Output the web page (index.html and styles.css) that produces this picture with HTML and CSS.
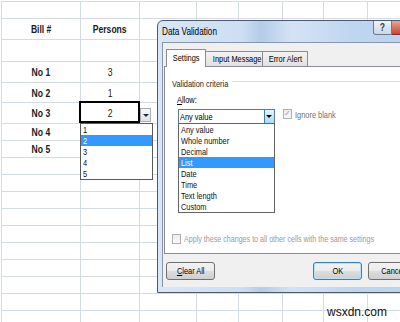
FILE: index.html
```html
<!DOCTYPE html>
<html lang="en">
<head>
    <meta charset="UTF-8">
    <meta name="viewport" content="width=device-width, initial-scale=1.0">
    <title>Data Validation</title>
    <link rel="stylesheet" href="styles.css">
</head>
<body>
    <div class="sheet">
        <div class="row h17"><div class="cell"></div><div class="cell"></div><div class="cell"></div><div class="cell"></div><div class="cell"></div><div class="cell"></div><div class="cell"></div><div class="cell"></div></div>
        <div class="row h21"><div class="cell bold"><span class="t">Bill #</span></div><div class="cell bold"><span class="t">Persons</span></div><div class="cell"></div><div class="cell"></div><div class="cell"></div><div class="cell"></div><div class="cell"></div><div class="cell"></div></div>
        <div class="row h22"><div class="cell"></div><div class="cell"></div><div class="cell"></div><div class="cell"></div><div class="cell"></div><div class="cell"></div><div class="cell"></div><div class="cell"></div></div>
        <div class="row h21"><div class="cell bold"><span class="t">No 1</span></div><div class="cell"><span class="t">3</span></div><div class="cell"></div><div class="cell"></div><div class="cell"></div><div class="cell"></div><div class="cell"></div><div class="cell"></div></div>
        <div class="row h20"><div class="cell bold"><span class="t">No 2</span></div><div class="cell"><span class="t">1</span></div><div class="cell"></div><div class="cell"></div><div class="cell"></div><div class="cell"></div><div class="cell"></div><div class="cell"></div></div>
        <div class="row h21">
            <div class="cell bold"><span class="t">No 3</span></div>
            <div class="cell active"><span class="t">2</span>
                <span class="cell-drop"></span>
                <ul class="cell-list">
                    <li><span class="t">1</span></li>
                    <li class="sel"><span class="t">2</span></li>
                    <li><span class="t">3</span></li>
                    <li><span class="t">4</span></li>
                    <li><span class="t">5</span></li>
                </ul>
            </div>
            <div class="cell"></div><div class="cell"></div><div class="cell"></div><div class="cell"></div><div class="cell"></div><div class="cell"></div>
        </div>
        <div class="row h17"><div class="cell bold"><span class="t">No 4</span></div><div class="cell"></div><div class="cell"></div><div class="cell"></div><div class="cell"></div><div class="cell"></div><div class="cell"></div><div class="cell"></div></div>
        <div class="row h17"><div class="cell bold"><span class="t">No 5</span></div><div class="cell"></div><div class="cell"></div><div class="cell"></div><div class="cell"></div><div class="cell"></div><div class="cell"></div><div class="cell"></div></div>
        <div class="row h17"><div class="cell"></div><div class="cell"></div><div class="cell"></div><div class="cell"></div><div class="cell"></div><div class="cell"></div><div class="cell"></div><div class="cell"></div></div>
        <div class="row h17"><div class="cell"></div><div class="cell"></div><div class="cell"></div><div class="cell"></div><div class="cell"></div><div class="cell"></div><div class="cell"></div><div class="cell"></div></div>
        <div class="row h17"><div class="cell"></div><div class="cell"></div><div class="cell"></div><div class="cell"></div><div class="cell"></div><div class="cell"></div><div class="cell"></div><div class="cell"></div></div>
        <div class="row h17"><div class="cell"></div><div class="cell"></div><div class="cell"></div><div class="cell"></div><div class="cell"></div><div class="cell"></div><div class="cell"></div><div class="cell"></div></div>
        <div class="row h17"><div class="cell"></div><div class="cell"></div><div class="cell"></div><div class="cell"></div><div class="cell"></div><div class="cell"></div><div class="cell"></div><div class="cell"></div></div>
        <div class="row h17"><div class="cell"></div><div class="cell"></div><div class="cell"></div><div class="cell"></div><div class="cell"></div><div class="cell"></div><div class="cell"></div><div class="cell"></div></div>
        <div class="row h17"><div class="cell"></div><div class="cell"></div><div class="cell"></div><div class="cell"></div><div class="cell"></div><div class="cell"></div><div class="cell"></div><div class="cell"></div></div>
        <div class="row h17"><div class="cell"></div><div class="cell"></div><div class="cell"></div><div class="cell"></div><div class="cell"></div><div class="cell"></div><div class="cell"></div><div class="cell"></div></div>
        <div class="row h17"><div class="cell"></div><div class="cell"></div><div class="cell"></div><div class="cell"></div><div class="cell"></div><div class="cell"></div><div class="cell"></div><div class="cell"></div></div>
        <div class="row h17"><div class="cell"></div><div class="cell"></div><div class="cell"></div><div class="cell"></div><div class="cell"></div><div class="cell"></div><div class="cell"></div><div class="cell"></div></div>
    </div>

    <div class="dialog">
        <div class="titlebar">
            <span class="title t">Data Validation</span>
            <div class="caption-btns">
                <span class="help-btn"><span class="t">?</span></span>
                <span class="close-btn"></span>
            </div>
        </div>
        <div class="client">
            <div class="tabs">
                <span class="tab tab-settings active"><span class="t">Settings</span></span>
                <span class="tab tab-input"><span class="t">Input Message</span></span>
                <span class="tab tab-error"><span class="t">Error Alert</span></span>
            </div>
            <div class="panel">
                <div class="group-title"><span class="t">Validation criteria</span></div>
                <div class="allow-label"><span class="t"><u>A</u>llow:</span></div>
                <div class="allow-row">
                    <div class="combo">
                        <span class="combo-text"><span class="t">Any value</span></span>
                        <span class="combo-btn"></span>
                        <ul class="combo-list">
                            <li><span class="t">Any value</span></li>
                            <li><span class="t">Whole number</span></li>
                            <li><span class="t">Decimal</span></li>
                            <li class="sel"><span class="t">List</span></li>
                            <li><span class="t">Date</span></li>
                            <li><span class="t">Time</span></li>
                            <li><span class="t">Text length</span></li>
                            <li><span class="t">Custom</span></li>
                        </ul>
                    </div>
                    <label class="check ignore"><span class="box checked">&#10003;</span><span class="t">Ignore blank</span></label>
                </div>
                <label class="check apply"><span class="box"></span><span class="t">Apply these changes to all other cells with the same settings</span></label>
            </div>
            <div class="buttons">
                <span class="btn"><span class="t"><u>C</u>lear All</span></span>
                <span class="btn ok"><span class="t">OK</span></span>
                <span class="btn cancel"><span class="t">Cancel</span></span>
            </div>
        </div>
    </div>

    <div class="watermark">wsxdn.com</div>
</body>
</html>
```

FILE: styles.css
```css
* {
    box-sizing: border-box;
}
html, body {
    margin: 0;
    padding: 0;
    overflow: hidden;
}
body {
    position: relative;
    width: 400px;
    height: 322px;
    background-color: #fff;
    font-family: "Liberation Sans", Arial, sans-serif;
    color: #000;
}
/* the screenshot is squeezed sideways, so every label is narrowed */
.t {
    display: inline-block;
    white-space: nowrap;
    transform: scaleX(0.78);
    transform-origin: left center;
}
.cell .t,
.tab .t,
.btn .t,
.help-btn .t {
    transform-origin: center;
}
/* spreadsheet behind the dialog */
.sheet {
    margin: 1px 0 0 1px;
    border-top: 1px solid #d5dbe6;
    border-left: 1px solid #d5dbe6;
    width: max-content;
}
.row {
    display: grid;
    grid-template-columns: 79px 59px 57px 42px 44px 41px 44px 44px;
}
.h17 { height: 17px; }
.h20 { height: 20px; }
.h21 { height: 21px; }
.h22 { height: 22px; }
.cell {
    position: relative;
    border-right: 1px solid #d5dbe6;
    border-bottom: 1px solid #d5dbe6;
    display: flex;
    align-items: center;
    justify-content: center;
    font-size: 11px;
    color: #1a1a1a;
}
.cell.bold {
    font-weight: bold;
}
.cell.active::after {
    content: "";
    position: absolute;
    top: -2px;
    left: -2px;
    right: -1px;
    bottom: 0;
    border: 2px solid #000;
}
.cell-drop {
    position: absolute;
    left: calc(100% + 1px);
    top: 5px;
    width: 11px;
    height: 14px;
    border: 1px solid #a9adb5;
    background: linear-gradient(#f7f7f7, #dfe2e6);
}
.cell-drop::after {
    content: "";
    position: absolute;
    left: 2px;
    top: 5px;
    border-left: 3px solid transparent;
    border-right: 3px solid transparent;
    border-top: 3px solid #1e2a44;
}
.cell-list {
    position: absolute;
    top: 100%;
    left: -1px;
    width: 73px;
    margin: 0;
    padding: 0;
    list-style: none;
    background: #fff;
    border: 1px solid #5a5a5a;
    z-index: 2;
    text-align: left;
}
.cell-list li,
.combo-list li {
    height: 11px;
    line-height: 11px;
    font-size: 9.5px;
    padding-left: 2px;
    color: #111;
}
.cell-list li .t {
    transform-origin: left center;
}
.cell-list li.sel,
.combo-list li.sel {
    background-color: #3399ff;
    color: #fff;
}
/* dialog window */
.dialog {
    position: absolute;
    left: 157px;
    top: 20px;
    width: 280px;
    height: 273px;
    border: 1px solid #4b5b6d;
    border-radius: 6px 6px 0 0;
    background: linear-gradient(to right, #d9e6f5 0%, #cddff3 30%, #b4cce8 37%, #d3e3f5 48%, #bfd6f0 70%, #b9d1ee 100%);
    padding: 0 5px 5px 4px;
    display: flex;
    flex-direction: column;
    z-index: 3;
}
.titlebar {
    height: 21px;
    display: flex;
    align-items: flex-start;
    margin-left: -4px;
    padding-left: 4px;
    margin-right: -5px;
}
.title {
    line-height: 21px;
    font-size: 10.5px;
    color: #000;
}
.caption-btns {
    margin-left: auto;
    display: flex;
}
.help-btn {
    width: 19px;
    height: 14px;
    border: 1px solid #6c7d92;
    border-top: none;
    border-radius: 0 0 0 3px;
    background: linear-gradient(#eef3f9, #cbd8e8);
    font-size: 11px;
    font-weight: bold;
    color: #2b3b55;
    text-align: center;
    line-height: 13px;
}
.close-btn {
    width: 44px;
    height: 14px;
    border: 1px solid #7a3030;
    border-top: none;
    border-left: none;
    background: linear-gradient(#e8a593, #c7453a);
}
.client {
    flex: 1;
    border-top: 1px solid #8797ab;
    border-left: 1px solid #8797ab;
    background-color: #f0f0f0;
    display: flex;
    flex-direction: column;
    font-size: 9.5px;
}
.tabs {
    margin: 6px 0 0 3px;
    height: 17px;
    display: flex;
    align-items: flex-end;
}
.tab {
    height: 15px;
    border: 1px solid #898c95;
    border-bottom: none;
    background: linear-gradient(#f3f3f3, #e1e1e1);
    text-align: center;
    line-height: 13px;
    color: #000;
}
.tab.active {
    position: relative;
    z-index: 1;
    height: 18px;
    margin-bottom: -1px;
    background: #fff;
    line-height: 16px;
}
.tab-settings { width: 40px; }
.tab-input { width: 58px; margin-left: -1px; }
.tab-error { width: 46px; margin-left: -1px; }
.panel {
    height: 188px;
    margin-left: 1px;
    border: 1px solid #898c95;
    background-color: #fff;
    display: flex;
    flex-direction: column;
    padding: 0 8px 9px 7px;
}
.group-title {
    margin-top: 10px;
    height: 12px;
    display: flex;
    align-items: center;
    color: #1e1e1e;
}
.group-title::after {
    content: "";
    flex: 1;
    height: 1px;
    margin-left: -12px;
    margin-top: -3px;
    background-color: #d5dde6;
}
.allow-label {
    margin: 5px 0 0 5px;
    height: 12px;
    line-height: 12px;
}
.allow-row {
    margin-top: 3px;
    display: flex;
    align-items: flex-start;
}
.combo {
    position: relative;
    margin-left: 6px;
    width: 97px;
    height: 15px;
    border: 1px solid #5d7a98;
    background: #fff;
    display: flex;
}
.combo-text {
    flex: 1;
    padding-left: 1px;
    line-height: 13px;
}
.combo-btn {
    position: relative;
    width: 10px;
    border-left: 1px solid #3c7fb1;
    background: linear-gradient(#e5f4fc, #a9daf7);
}
.combo-btn::after {
    content: "";
    position: absolute;
    left: 1px;
    top: 5px;
    border-left: 3px solid transparent;
    border-right: 3px solid transparent;
    border-top: 3px solid #000;
}
.combo-list {
    position: absolute;
    top: 100%;
    left: -1px;
    right: -1px;
    height: 90px;
    margin: 0;
    padding: 0;
    list-style: none;
    background: #fff;
    border: 1px solid #646464;
    z-index: 2;
}
.check {
    display: flex;
    align-items: center;
}
.box {
    width: 9px;
    height: 10px;
    flex: none;
    border: 1px solid #b1b1b1;
    background: linear-gradient(#ededed, #f9f9f9);
    font-size: 8px;
    line-height: 8px;
    text-align: center;
    color: #a0a0a0;
}
.check .box + .t {
    margin-left: 3px;
}
.ignore {
    margin-left: 8px;
    height: 10px;
    color: #707070;
}
.apply {
    margin-top: auto;
    height: 11px;
    color: #9a9a9a;
}
.apply .t {
    transform: scaleX(0.75);
}
.buttons {
    margin: 8px 0 0 3px;
    padding-right: 14px;
    display: flex;
}
.btn {
    width: 49px;
    height: 18px;
    border: 1px solid #707070;
    border-radius: 3px;
    background: linear-gradient(#f2f2f2 0%, #ebebeb 50%, #dddddd 51%, #cfcfcf 100%);
    text-align: center;
    line-height: 16px;
    color: #000;
}
.btn.ok {
    margin-left: auto;
    border-color: #3c7fb1;
    box-shadow: inset 0 0 0 1px #b8e0f8;
}
.btn.cancel {
    margin-left: 6px;
}
.watermark {
    position: absolute;
    left: 327px;
    top: 305px;
    font-size: 12px;
    line-height: 14px;
    color: #111;
    z-index: 4;
}
```
